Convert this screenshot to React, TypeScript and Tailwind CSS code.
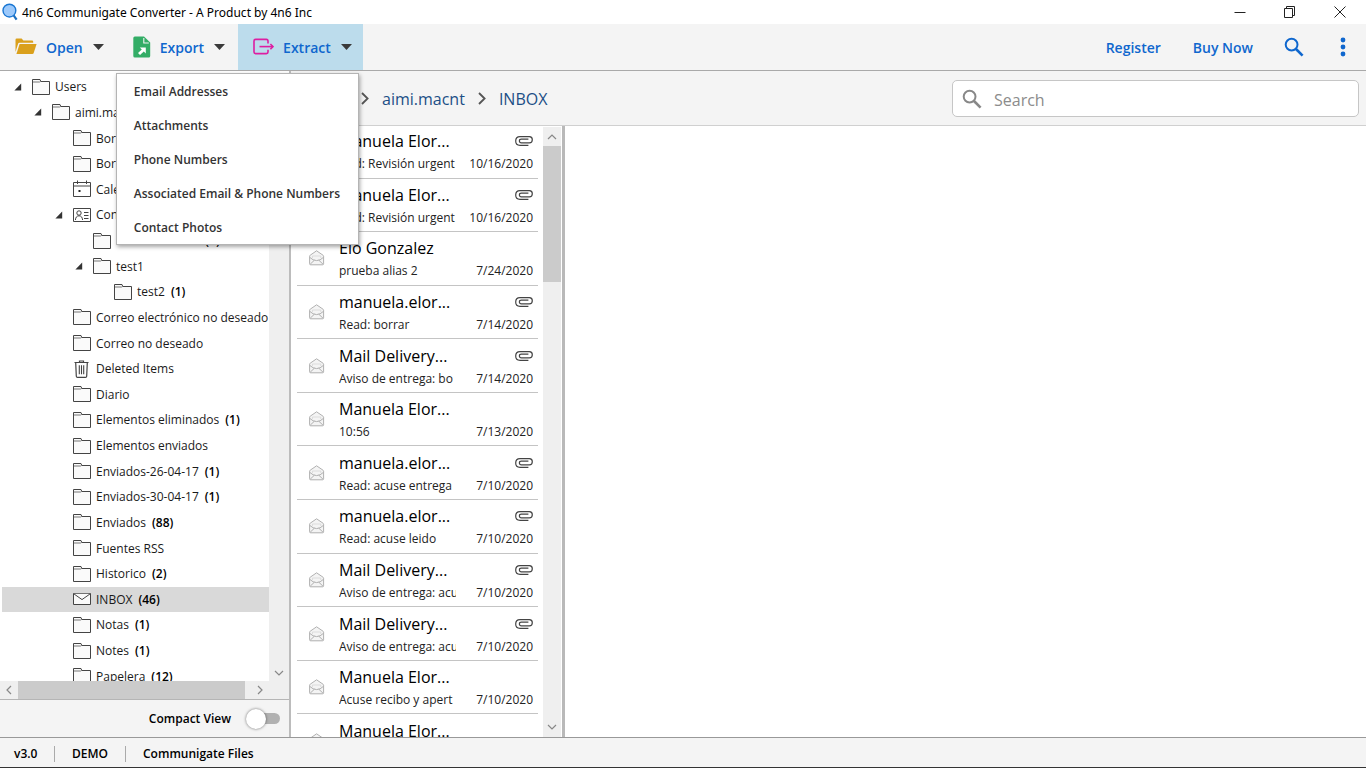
import type { ReactNode } from "react";

type NodeIcon = "folder" | "calendar" | "contact" | "trash" | "mail";

interface TreeNode {
  label: string;
  depth: number;
  icon?: NodeIcon;
  count?: number;
  expanded?: boolean;
  selected?: boolean;
}

interface MailItem {
  sender: string;
  subject: string;
  date: string;
  attachment?: boolean;
}

const TREE: TreeNode[] = [
  { label: "Users", depth: 0, expanded: true },
  { label: "aimi.macnt", depth: 1, expanded: true },
  { label: "Borradores", depth: 2 },
  { label: "Borrador", depth: 2 },
  { label: "Calendario", depth: 2, icon: "calendar" },
  { label: "Contactos", depth: 2, icon: "contact", expanded: true },
  { label: "Lista contactos", depth: 3, count: 1 },
  { label: "test1", depth: 3, expanded: true },
  { label: "test2", depth: 4, count: 1 },
  { label: "Correo electrónico no deseado", depth: 2 },
  { label: "Correo no deseado", depth: 2 },
  { label: "Deleted Items", depth: 2, icon: "trash" },
  { label: "Diario", depth: 2 },
  { label: "Elementos eliminados", depth: 2, count: 1 },
  { label: "Elementos enviados", depth: 2 },
  { label: "Enviados-26-04-17", depth: 2, count: 1 },
  { label: "Enviados-30-04-17", depth: 2, count: 1 },
  { label: "Enviados", depth: 2, count: 88 },
  { label: "Fuentes RSS", depth: 2 },
  { label: "Historico", depth: 2, count: 2 },
  { label: "INBOX", depth: 2, icon: "mail", count: 46, selected: true },
  { label: "Notas", depth: 2, count: 1 },
  { label: "Notes", depth: 2, count: 1 },
  { label: "Papelera", depth: 2, count: 12 },
];

const INDENT = ["pl-[10px]", "pl-[30px]", "pl-[51px]", "pl-[71px]", "pl-[92px]"];

const MAILS: MailItem[] = [
  { sender: "Manuela Elor...", subject: "Fwd: Revisión urgent", date: "10/16/2020", attachment: true },
  { sender: "Manuela Elor...", subject: "Fwd: Revisión urgent", date: "10/16/2020", attachment: true },
  { sender: "Elo Gonzalez", subject: "prueba alias 2", date: "7/24/2020" },
  { sender: "manuela.elor...", subject: "Read: borrar", date: "7/14/2020", attachment: true },
  { sender: "Mail Delivery...", subject: "Aviso de entrega: bo", date: "7/14/2020", attachment: true },
  { sender: "Manuela Elor...", subject: "10:56", date: "7/13/2020" },
  { sender: "manuela.elor...", subject: "Read: acuse entrega", date: "7/10/2020", attachment: true },
  { sender: "manuela.elor...", subject: "Read: acuse leido", date: "7/10/2020", attachment: true },
  { sender: "Mail Delivery...", subject: "Aviso de entrega: acu", date: "7/10/2020", attachment: true },
  { sender: "Mail Delivery...", subject: "Aviso de entrega: acu", date: "7/10/2020", attachment: true },
  { sender: "Manuela Elor...", subject: "Acuse recibo y apert", date: "7/10/2020" },
  { sender: "Manuela Elor...", subject: "Acuse recibo", date: "7/10/2020" },
];

const EXTRACT_ITEMS = [
  "Email Addresses",
  "Attachments",
  "Phone Numbers",
  "Associated Email & Phone Numbers",
  "Contact Photos",
];

function AppLogo() {
  return (
    <svg width="18" height="18" viewBox="0 0 18 18" fill="none">
      <path d="M11.6 12.4l3 4.2" stroke="#1b6fc0" strokeWidth="2.2" />
      <circle cx="7.4" cy="7.6" r="6.4" fill="#9cc9fb" stroke="#1976d2" strokeWidth="1.4" />
    </svg>
  );
}

function OpenFolderIcon() {
  return (
    <svg width="22" height="18" viewBox="0 0 22 18">
      <path d="M0.5 14V1.8Q0.5 0.6 1.7 0.6H6.6L8.4 2.4H17Q18.2 2.4 18.2 3.6V4.8H4.4Q3.5 4.8 3.2 5.6L0.5 14Z" fill="#daa01c" />
      <path d="M4.6 6H21.6L18.6 15.2Q18.3 16 17.4 16H1.4Z" fill="#daa01c" />
    </svg>
  );
}

function ExportIcon() {
  return (
    <svg width="18" height="22" viewBox="0 0 18 22">
      <path d="M1.8 0.5H11L17.2 6.6V20Q17.2 21.5 15.7 21.5H1.8Q0.3 21.5 0.3 20V2Q0.3 0.5 1.8 0.5Z" fill="#33ad66" />
      <path d="M10.8 2V7H15.8" fill="none" stroke="#f4f4f4" strokeWidth="1.1" />
      <path d="M6.8 11.4H12.8V17.4L10.8 15.5L7 19L5 17L8.8 13.4Z" fill="#fff" />
    </svg>
  );
}

function ExtractIcon() {
  return (
    <svg width="21" height="18" viewBox="0 0 21 18" fill="none" stroke="#dd1fa2" strokeWidth="1.6">
      <path d="M15 5.4V3Q15 1.4 13.4 1.4H2.6Q1 1.4 1 3V14Q1 15.6 2.6 15.6H13.4Q15 15.6 15 14V11.8" />
      <path d="M6.5 8.6H20" />
      <path d="M17.4 6L20 8.6L17.4 11.2" />
    </svg>
  );
}

function Caret() {
  return (
    <svg width="11" height="6" viewBox="0 0 11 6">
      <path d="M0 0H11L5.5 6Z" fill="#3a3a3a" />
    </svg>
  );
}

function SearchIcon({ className }: { className: string }) {
  return (
    <svg className={className} viewBox="0 0 20 20" fill="none" stroke="currentColor">
      <circle cx="7.6" cy="7.6" r="5.9" strokeWidth="2" />
      <path d="M12 12L18.6 18.6" strokeWidth="2.6" />
    </svg>
  );
}

function Chevron({ d, className }: { d: string; className: string }) {
  return (
    <svg className={className} viewBox="0 0 10 10" fill="none" stroke="currentColor">
      <path d={d} strokeWidth="1.2" />
    </svg>
  );
}

function CrumbArrow() {
  return (
    <svg width="8" height="13" viewBox="0 0 8 13" fill="none" stroke="#555" strokeWidth="1.8">
      <path d="M1 1L6.6 6.5L1 12" />
    </svg>
  );
}

function TreeIcon({ name }: { name: NodeIcon }) {
  if (name === "calendar") {
    return (
      <svg width="18" height="18" viewBox="0 0 18 18" fill="none" stroke="#444">
        <path d="M0.5 2.5H17.5V16.5H0.5ZM0.5 6H17.5M4.5 0.5V4M13.5 0.5V4" />
        <rect x="5.5" y="10" width="2" height="2" fill="#222" stroke="none" />
      </svg>
    );
  }
  if (name === "contact") {
    return (
      <svg width="18" height="14" viewBox="0 0 18 14" fill="none" stroke="#444">
        <path d="M0.5 0.5H17.5V13.5H0.5Z" />
        <circle cx="6" cy="5" r="2.2" />
        <path d="M2.4 12Q2.8 7.8 6 7.8Q9.2 7.8 9.6 12M11 4.5H15.5M11 7.5H15.5M11 10.5H15.5" />
      </svg>
    );
  }
  if (name === "trash") {
    return (
      <svg width="18" height="18" viewBox="0 0 18 18" fill="none" stroke="#444">
        <path d="M1.5 2.5H15.5M6.5 2.5V1H10.5V2.5M2.7 2.5L3.3 16.2Q3.4 17.4 4.5 17.4H12.5Q13.6 17.4 13.7 16.2L14.3 2.5" strokeWidth="1.2" />
        <path d="M6.3 5.2V14.2M8.5 5.2V14.2M10.7 5.2V14.2" strokeWidth="1.1" />
      </svg>
    );
  }
  if (name === "mail") {
    return (
      <svg width="18" height="12" viewBox="0 0 18 12" fill="#fafafa" stroke="#444">
        <path d="M0.5 0.5H17.5V11.5H0.5Z" />
        <path d="M0.8 0.8L9 6.6L17.2 0.8" />
      </svg>
    );
  }
  return (
    <svg width="18" height="16" viewBox="0 0 18 16" fill="#fafafa" stroke="#444">
      <path d="M0.5 0.5H8L8.8 2.5H17.5V15.5H0.5Z" />
      <path d="M1 3H7.6L8.8 2.4" stroke="#777" />
    </svg>
  );
}

function PaperclipIcon() {
  return (
    <svg width="18" height="10" viewBox="0 0 18 10" fill="none" stroke="#444" strokeWidth="1.2">
      <path d="M13.4 9.3H5Q0.7 9.3 0.7 5Q0.7 0.7 5 0.7H14.4Q17.3 0.7 17.3 3.8Q17.3 6.9 14.4 6.9H6.4Q4.4 6.9 4.4 5Q4.4 3.2 6.4 3.2H13.4" />
    </svg>
  );
}

function OpenMailIcon() {
  return (
    <svg width="16" height="16" viewBox="0 0 16 16" fill="#f4f4f4" stroke="#b0b0b0">
      <path d="M0.6 6.2Q0.6 5.6 1.2 5.2L7.6 0.8L14 5.2Q14.6 5.6 14.6 6.2V13.8Q14.6 14.8 13.6 14.8H1.6Q0.6 14.8 0.6 13.8Z" />
      <path d="M0.8 7.4Q4 10.6 7.6 10.6Q11.2 10.6 14.4 7.4M1.2 14.2L5.4 10.2M14 14.2L9.8 10.2" fill="none" />
      <path d="M3.4 8V6H11.8V8" fill="none" stroke="#dcdcdc" />
    </svg>
  );
}

function TitleBar() {
  return (
    <header className="flex h-6 shrink-0 items-center pl-[2px] pr-[20px]">
      <AppLogo />
      <h1 className="ml-[2px] flex-1 whitespace-nowrap pt-px font-['Noto_Sans',sans-serif] text-[12px] text-black">
        4n6 Communigate Converter - A Product by 4n6 Inc
      </h1>
      <div className="flex gap-[38px]">
        <button type="button" aria-label="Minimize">
          <svg width="12" height="12" viewBox="0 0 12 12" stroke="#222">
            <path d="M0.5 6.5H11.5" />
          </svg>
        </button>
        <button type="button" aria-label="Restore">
          <svg width="12" height="12" viewBox="0 0 12 12" fill="none" stroke="#222">
            <path d="M0.5 2.5H8.5V11.5H0.5ZM2.5 2.5V0.5H10.5V9.5H8.5" />
          </svg>
        </button>
        <button type="button" aria-label="Close">
          <svg width="12" height="12" viewBox="0 0 12 12" stroke="#222">
            <path d="M0.5 0.5L11.5 11.5M11.5 0.5L0.5 11.5" />
          </svg>
        </button>
      </div>
    </header>
  );
}

function ToolButton({ icon, label, className }: { icon: ReactNode; label: string; className: string }) {
  return (
    <button type="button" className={`flex h-full items-center text-[14px] font-semibold text-[#0f67ce] ${className}`}>
      {icon}
      <span className="ml-[9px] mr-[10px]">{label}</span>
      <Caret />
    </button>
  );
}

function ExtractMenu() {
  return (
    <ul
      role="menu"
      className="absolute right-[4px] top-[49px] z-10 w-[243px] border border-[#b4b4b4] bg-white shadow-[1px_2px_4px_rgba(0,0,0,0.35)]"
    >
      {EXTRACT_ITEMS.map((item) => (
        <li key={item} role="none">
          <button
            type="button"
            role="menuitem"
            className="flex h-[34px] w-full items-center whitespace-nowrap pl-[17px] pt-[2px] text-[12px] font-semibold text-[#333]"
          >
            {item}
          </button>
        </li>
      ))}
    </ul>
  );
}

function Toolbar() {
  return (
    <nav className="flex h-[47px] shrink-0 items-center border-b border-[#a9a9a9] bg-[#f4f4f4]">
      <ToolButton icon={<OpenFolderIcon />} label="Open" className="pl-[15px] pr-[14px]" />
      <ToolButton icon={<ExportIcon />} label="Export" className="pl-[15px] pr-[13px]" />
      <div className="relative h-full">
        <ToolButton icon={<ExtractIcon />} label="Extract" className="bg-[#bcdcec] pl-[15px] pr-[11px]" />
        <ExtractMenu />
      </div>
      <div className="ml-auto flex items-center pr-[20px] text-[14px] font-semibold text-[#0f67ce]">
        <a href="#register">Register</a>
        <a href="#buy" className="ml-[32px]">
          Buy Now
        </a>
        <button type="button" aria-label="Search" className="ml-[31px]">
          <SearchIcon className="h-5 w-5" />
        </button>
        <button type="button" aria-label="More" className="ml-[36px]">
          <svg width="6" height="20" viewBox="0 0 6 20" fill="#0f67ce">
            <circle cx="3" cy="3" r="2.4" />
            <circle cx="3" cy="10" r="2.4" />
            <circle cx="3" cy="17" r="2.4" />
          </svg>
        </button>
      </div>
    </nav>
  );
}

function TreeRow({ node }: { node: TreeNode }) {
  return (
    <li
      className={`flex items-center whitespace-nowrap text-[12px] text-[#1a1a1a] ${INDENT[node.depth]} ${
        node.selected ? "bg-[#d9d9d9]" : ""
      }`}
    >
      <span className="w-[20px] shrink-0 pl-[2px]">
        {node.expanded && (
          <svg width="8" height="8" viewBox="0 0 8 8">
            <path d="M7.2 0.6V7.4H0.4Z" fill="#333" />
          </svg>
        )}
      </span>
      <span className="flex w-[18px] shrink-0 justify-center">
        <TreeIcon name={node.icon ?? "folder"} />
      </span>
      <span className="ml-[5px] pt-px">{node.label}</span>
      {node.count !== undefined && <span className="ml-[6px] pt-px font-semibold text-black">({node.count})</span>}
    </li>
  );
}

function Sidebar() {
  return (
    <aside className="flex w-[291px] shrink-0 flex-col border-r-2 border-[#bcbcbc]">
      <div className="flex min-h-0 flex-1 overflow-hidden pt-[3px]">
        <ul className="ml-[2px] grid h-[615px] flex-1 auto-rows-fr overflow-hidden">
          {TREE.map((node, i) => (
            <TreeRow key={i} node={node} />
          ))}
        </ul>
        <div className="flex w-[20px] shrink-0 flex-col items-center bg-[#efefef] text-[#888]">
          <Chevron d="M1 7L5 3L9 7" className="my-1 h-[10px] w-[10px]" />
          <div className="h-[140px] w-[18px] bg-[#cbcbcb]" />
          <Chevron d="M1 3L5 7L9 3" className="mb-[3px] mt-auto h-[10px] w-[10px]" />
        </div>
      </div>
      <div className="flex h-[18px] shrink-0 items-center bg-[#efefef] text-[#888]">
        <Chevron d="M7 1L3 5L7 9" className="mx-1 h-[10px] w-[10px]" />
        <div className="h-full w-[227px] bg-[#cbcbcb]" />
        <Chevron d="M3 1L7 5L3 9" className="ml-[10px] h-[10px] w-[10px]" />
      </div>
      <label className="flex h-[38px] shrink-0 items-center justify-end gap-[15px] border-t border-[#b5b5b5] bg-[#f4f4f4] pr-[9px] text-[12px] font-semibold text-black">
        Compact View
        <span className="flex h-5 w-[34px] items-center">
          <input type="checkbox" role="switch" className="peer sr-only" />
          <span className="z-[1] h-[20px] w-[20px] shrink-0 rounded-full bg-white shadow-[0_0_3px_rgba(0,0,0,0.55)]" />
          <span className="-ml-[10px] h-[11px] w-[24px] shrink-0 rounded-full bg-[#b1b1b1]" />
        </span>
      </label>
    </aside>
  );
}

function MailRow({ mail }: { mail: MailItem }) {
  return (
    <li className="flex items-center border-b border-[#c4c4c4] pl-[12px] pr-[5px]">
      <OpenMailIcon />
      <div className="ml-[14px] min-w-0 flex-1 pt-px">
        <div className="flex items-center justify-between">
          <span className="whitespace-nowrap text-[16px] leading-6 text-black">{mail.sender}</span>
          {mail.attachment && <PaperclipIcon />}
        </div>
        <div className="flex justify-between pt-px text-[12px] leading-5 text-[#222]">
          <span className="w-[117px] overflow-hidden whitespace-nowrap">{mail.subject}</span>
          <time>{mail.date}</time>
        </div>
      </div>
    </li>
  );
}

function MailList() {
  return (
    <section className="flex w-[274px] shrink-0 overflow-hidden border-r-[3px] border-[#b9b9b9]">
      <ul className="-mt-px ml-[6px] mr-[5px] grid h-[643px] flex-1 auto-rows-fr">
        {MAILS.map((mail, i) => (
          <MailRow key={i} mail={mail} />
        ))}
      </ul>
      <div className="mr-[1px] mt-[1px] flex w-[18px] shrink-0 flex-col items-center bg-[#efefef] text-[#888]">
        <Chevron d="M1 7L5 3L9 7" className="mb-1 mt-[5px] h-[10px] w-[10px]" />
        <div className="h-[136px] w-full bg-[#cbcbcb]" />
        <Chevron d="M1 3L5 7L9 3" className="mb-[5px] mt-auto h-[10px] w-[10px]" />
      </div>
    </section>
  );
}

function PathBar() {
  return (
    <div className="flex h-[55px] shrink-0 items-center border-b border-[#d0d0d0] bg-[#f4f4f4] pl-[14px] pr-[7px] pt-px">
      <div className="flex items-center text-[16px] text-[#1c4f86]">
        <a href="#users" className="w-[56px]">
          Users
        </a>
        <CrumbArrow />
        <a href="#account" className="mx-[13px]">
          aimi.macnt
        </a>
        <CrumbArrow />
        <a href="#inbox" className="ml-[13px]">
          INBOX
        </a>
      </div>
      <label className="ml-auto flex h-[37px] w-[407px] items-center rounded-[5px] border border-[#c6c6c6] bg-white pl-[9px] text-[#888]">
        <SearchIcon className="h-5 w-5" />
        <input
          type="text"
          placeholder="Search"
          aria-label="Search"
          className="ml-[12px] min-w-0 flex-1 pt-[2px] text-[16px] outline-none placeholder:text-[#8c8c8c]"
        />
      </label>
    </div>
  );
}

function StatusBar() {
  return (
    <footer className="flex h-[31px] shrink-0 items-center border-b border-t border-b-[#333] border-t-[#999] bg-[#f4f4f4] pl-[14px] pt-[2px] text-[12px] font-semibold text-black">
      <span className="w-[40px]">v3.0</span>
      <span className="h-4 w-px bg-[#aaa]" />
      <span className="ml-[17px] w-[53px]">DEMO</span>
      <span className="h-4 w-px bg-[#aaa]" />
      <span className="ml-[17px]">Communigate Files</span>
    </footer>
  );
}

export default function App() {
  return (
    <div className="flex h-screen flex-col overflow-hidden bg-white font-['Open_Sans','Noto_Sans',sans-serif]">
      <TitleBar />
      <Toolbar />
      <main className="flex min-h-0 flex-1">
        <Sidebar />
        <div className="flex min-w-0 flex-1 flex-col">
          <PathBar />
          <div className="flex min-h-0 flex-1">
            <MailList />
            <article className="flex-1 bg-white" />
          </div>
        </div>
      </main>
      <StatusBar />
    </div>
  );
}
